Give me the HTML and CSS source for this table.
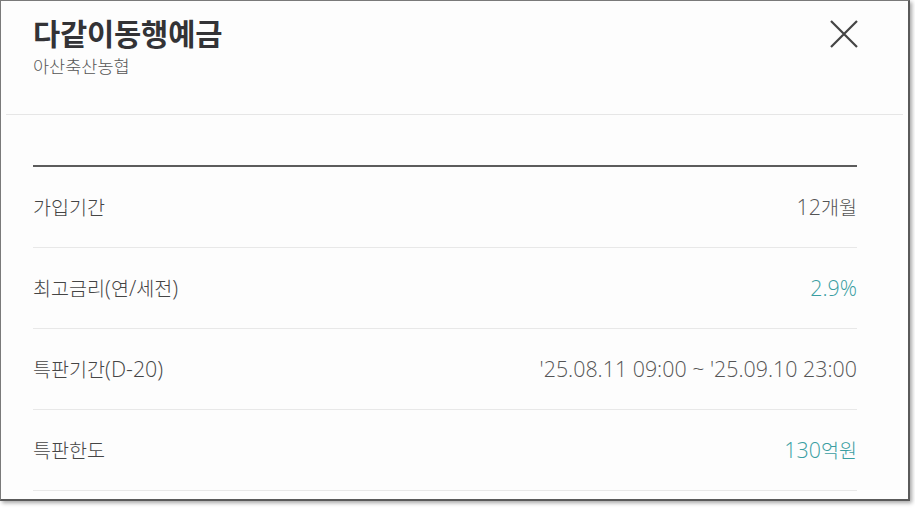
FILE: index.html
```html
<!DOCTYPE html>
<html lang="ko">
<head>
<meta charset="utf-8">
<link rel="stylesheet" href="styles.css">
</head>
<body>
<div class="window">
  <header class="head">
    <div class="titles">
      <h1 class="title">다같이동행예금</h1>
      <p class="sub">아산축산농협</p>
    </div>
    <button class="close" aria-label="닫기">
      <svg width="30" height="30" viewBox="0 0 30 30"><path d="M2 2 L28 28 M28 2 L2 28" stroke="#444" stroke-width="2.2" fill="none"/></svg>
    </button>
  </header>
  <div class="body">
    <dl class="table">
      <div class="row"><dt>가입기간</dt><dd><span class="en">12</span>개월</dd></div>
      <div class="row"><dt>최고금리<span class="en">(</span>연<span class="en">/</span>세전<span class="en">)</span></dt><dd class="teal en">2.9%</dd></div>
      <div class="row"><dt>특판기간<span class="en">(D-20)</span></dt><dd class="en">'25.08.11 09:00 ~ '25.09.10 23:00</dd></div>
      <div class="row"><dt>특판한도</dt><dd class="teal"><span class="en">130</span>억원</dd></div>
    </dl>
  </div>
</div>
</body>
</html>
```
FILE: styles.css
```css
* { box-sizing: border-box; }
html, body { margin: 0; padding: 0; background: #ffffff; }
body {
  font-family: "Noto Sans CJK KR", sans-serif;
  width: 915px; height: 508px; overflow: hidden;
}
.window {
  width: 910px; height: 501px;
  background: #fdfdfd;
  border-top: 1px solid #7a7a7a;
  border-left: 1px solid #7a7a7a;
  border-right: 2px solid #5a5a5a;
  border-bottom: 2px solid #5a5a5a;
  box-shadow: 2px 2px 4px rgba(0,0,0,0.35);
  overflow: hidden;
}
.head {
  margin: 0 5px;
  height: 114px;
  border-bottom: 1px solid #e6e6e6;
  display: flex;
  justify-content: space-between;
  align-items: flex-start;
  padding: 12px 44px 0 27px;
}
.title {
  margin: 0;
  font-size: 29.6px;
  font-weight: 700;
  line-height: 40px;
  color: #333336;
  letter-spacing: -0.2px;
}
.sub {
  margin: 1px 0 0;
  font-size: 17.5px;
  font-weight: 300;
  line-height: 24px;
  color: #555;
}
.close {
  margin-top: 6px;
  padding: 0;
  border: 0;
  background: none;
  width: 30px; height: 30px;
}
.close svg { display: block; }
.body { padding: 50px 51px 0 32px; }
.table {
  margin: 0;
  border-top: 2px solid #5c5c5c;
}
.row {
  display: flex;
  justify-content: space-between;
  align-items: center;
  height: 81px;
  border-bottom: 1px solid #e8e8e8;
}
.row dt, .row dd {
  margin: 0;
  font-size: 19.6px;
  font-weight: 300;
  color: #454545;
  line-height: 28px;
}
.row dd { color: #555; }
.row .en {
  font-family: "Open Sans", "Noto Sans", sans-serif;
  font-size: 21.4px;
  font-weight: 300;
}
.row dd.teal { color: #3a9ea2; }
```
